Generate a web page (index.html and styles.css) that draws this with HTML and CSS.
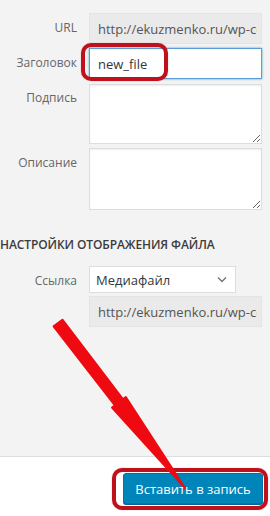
FILE: index.html
```html
<html>
<head>
	<title>Attachment details</title>
	<link rel="stylesheet" href="styles.css">
</head>
<body>
	<div class="page">
		<div class="details">
			<div class="setting">
				<span class="name">URL</span>
				<input type="text" class="field readonly" value="http://ekuzmenko.ru/wp-content/uploads/new_file.jpg" readonly>
			</div>
			<div class="setting">
				<span class="name">Заголовок</span>
				<input type="text" class="field focused" value="new_file">
			</div>
			<div class="setting">
				<span class="name">Подпись</span>
				<textarea class="field caption"></textarea>
			</div>
			<div class="setting">
				<span class="name">Описание</span>
				<textarea class="field description"></textarea>
			</div>

			<h2>Настройки отображения файла</h2>

			<div class="setting">
				<span class="name">Ссылка</span>
				<div class="select">
					<span>Медиафайл</span>
					<svg class="chevron" width="10" height="7" viewBox="0 0 10 7"><path d="M1 1.5 L5 5.5 L9 1.5" fill="none" stroke="#777" stroke-width="1.5"/></svg>
				</div>
			</div>
			<div class="setting">
				<span class="name"></span>
				<input type="text" class="field readonly" value="http://ekuzmenko.ru/wp-content/uploads/new_file.jpg" readonly>
			</div>
		</div>

		<div class="toolbar">
			<button class="insert">Вставить в запись</button>
		</div>

		<!-- red marks drawn over the screenshot -->
		<div class="ring ring-title"></div>
		<div class="ring ring-button"></div>
		<svg class="arrow" width="270" height="516" viewBox="0 0 270 516">
			<polygon points="62.4,319.7 122.9,399.2 125.8,397 185,488 112,407.6 114.9,405.3 53.6,326.3" fill="#ee0a10" stroke="#ee0a10" stroke-width="2" stroke-linejoin="round"/>
		</svg>
	</div>
</body>
</html>
```

FILE: styles.css
```css
body {
    margin: 0;
    background-color: #f3f3f3;
    font-family: "Open Sans", "Liberation Sans", sans-serif;
    font-size: 13px;
    color: #444;
}

.page {
    position: relative;
    width: 270px;
    height: 516px;
    overflow: hidden;
}

.details {
    height: 457px;
    box-sizing: border-box;
    padding-top: 13px;
    border-bottom: 1px solid #dddddd;
}

.setting {
    display: flex;
    gap: 12px;
    margin-bottom: 4px;
}

.setting .name {
    width: 77px;
    flex: none;
    text-align: right;
    padding-top: 6px;
    line-height: 18px;
    font-size: 12px;
    color: #666;
}

.field {
    width: 173px;
    height: 31px;
    box-sizing: border-box;
    margin: 0;
    padding: 0 8px;
    border: 1px solid #dddddd;
    background-color: #fff;
    font-family: "Open Sans", "Liberation Sans", sans-serif;
    font-size: 13px;
    color: #32373c;
    outline: none;
    box-shadow: inset 0 1px 2px rgba(0, 0, 0, 0.07);
}

.readonly {
    background-color: #eaeaea;
    border-color: #e4e4e4;
    box-shadow: none;
    color: #555;
    padding-right: 4px;
}

.focused {
    border-color: #5b9dd9;
    box-shadow: 0 0 2px rgba(30, 140, 190, 0.8);
}

.caption {
    height: 60px;
    margin-top: 1px;
    resize: both;
}

.description {
    height: 62px;
    resize: both;
}

h2 {
    margin: 27px 0 13px 0;
    font-size: 12px;
    line-height: 16px;
    font-weight: 600;
    letter-spacing: -0.1px;
    text-transform: uppercase;
    color: #3c3c3c;
}

.select {
    width: 147px;
    height: 27px;
    box-sizing: border-box;
    display: flex;
    align-items: center;
    justify-content: space-between;
    padding: 0 8px 0 6px;
    background-color: #fff;
    border: 1px solid #dddddd;
    color: #32373c;
    margin-bottom: -1px;
}

.toolbar {
    height: 59px;
    background-color: #fff;
    display: flex;
    justify-content: flex-end;
    align-items: flex-start;
    padding-right: 7px;
}

.insert {
    margin-top: 16px;
    width: 140px;
    height: 31px;
    background-color: #0085ba;
    border: 1px solid #0073aa;
    border-radius: 3px;
    color: #fff;
    font-family: "Open Sans", "Liberation Sans", sans-serif;
    font-size: 13px;
    padding: 0;
    box-shadow: 0 1px 0 #006799;
}

.ring {
    position: absolute;
    border: 4px solid #bf111c;
    border-radius: 10px;
    box-shadow: 0 0 1px #e86a70;
}

.ring-title {
    left: 81px;
    top: 43px;
    width: 79px;
    height: 30px;
}

.ring-button {
    left: 112px;
    top: 468px;
    width: 148px;
    height: 34px;
}

.arrow {
    position: absolute;
    left: 0;
    top: 0;
    pointer-events: none;
}
```
